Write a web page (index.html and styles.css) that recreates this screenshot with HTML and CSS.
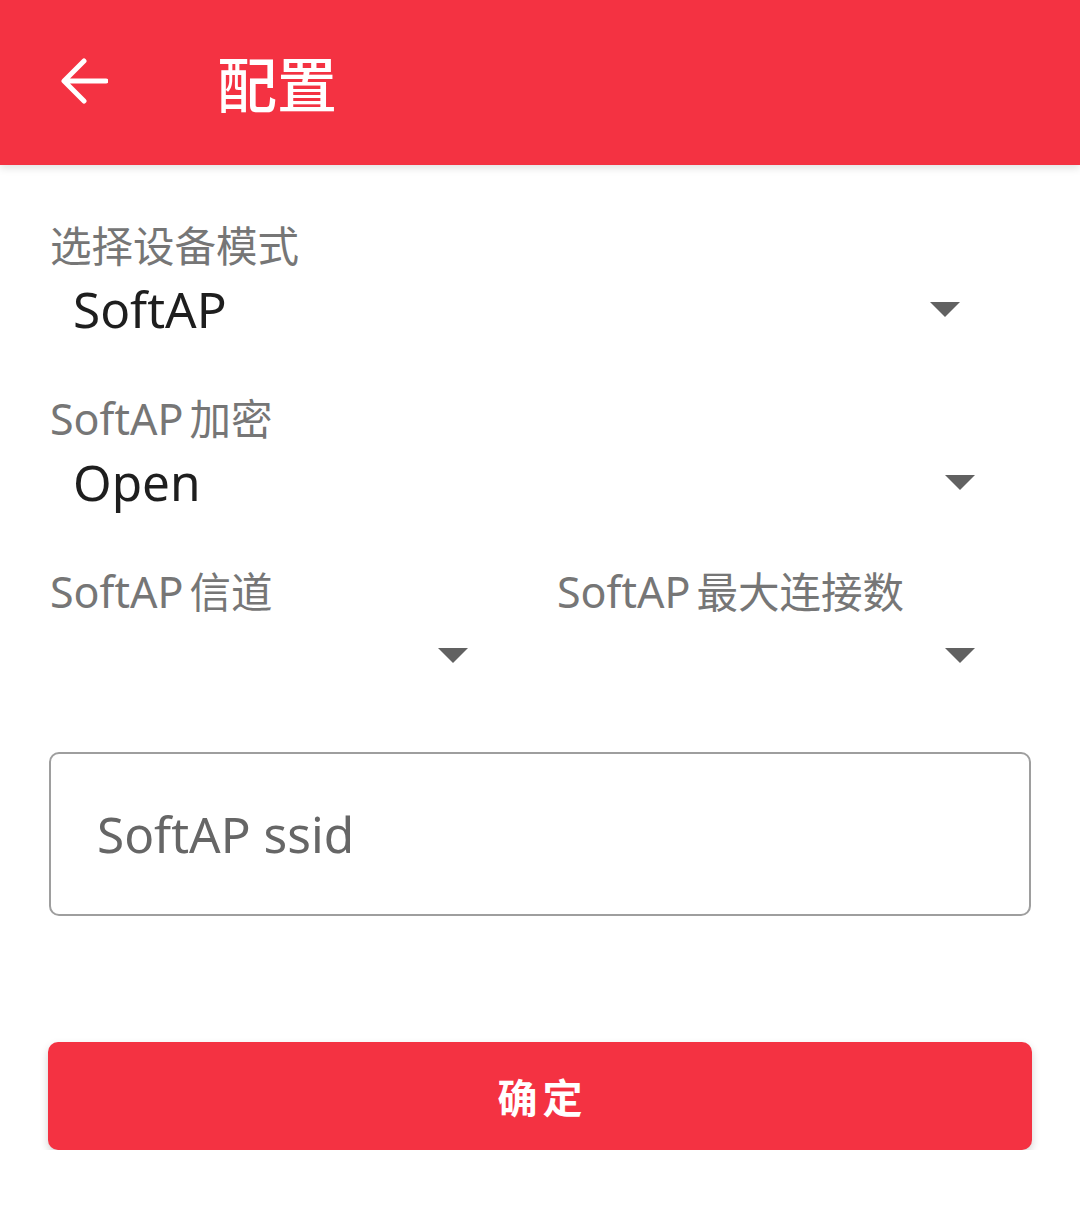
FILE: index.html
```html
<!DOCTYPE html>
<html lang="zh-CN">
<head>
    <meta charset="UTF-8">
    <meta name="viewport" content="width=device-width, initial-scale=1.0">
    <title>配置</title>
    <link rel="stylesheet" href="styles.css">
</head>
<body>
    <header class="toolbar">
        <button class="back-btn" aria-label="返回">
            <svg width="48" height="48" viewBox="0 0 48 48">
                <path d="M46 24H6M24 4L4 24l20 20" fill="none" stroke="#fff" stroke-width="5" stroke-linecap="round" stroke-linejoin="round"/>
            </svg>
        </button>
        <h1 class="title">配置</h1>
    </header>

    <main class="form">
        <div class="field">
            <label class="field-label">选择设备模式</label>
            <div class="spinner spinner-mode">
                <span class="spinner-value">SoftAP</span>
                <span class="caret"></span>
            </div>
        </div>

        <div class="field">
            <label class="field-label"><span class="latin">SoftAP</span>加密</label>
            <div class="spinner">
                <span class="spinner-value">Open</span>
                <span class="caret"></span>
            </div>
        </div>

        <div class="field-row">
            <div class="field">
                <label class="field-label"><span class="latin">SoftAP</span>信道</label>
                <div class="spinner spinner-left">
                    <span class="spinner-value"></span>
                    <span class="caret"></span>
                </div>
            </div>
            <div class="field field-right">
                <label class="field-label"><span class="latin">SoftAP</span>最大连接数</label>
                <div class="spinner">
                    <span class="spinner-value"></span>
                    <span class="caret"></span>
                </div>
            </div>
        </div>

        <div class="text-input">
            <input type="text" placeholder="SoftAP ssid">
        </div>

        <button class="confirm-btn">确定</button>
    </main>
</body>
</html>
```

FILE: styles.css
```css
* {
    margin: 0;
    padding: 0;
    box-sizing: border-box;
}

body {
    background: #fff;
    font-family: 'Noto Sans', 'Noto Sans CJK SC', sans-serif;
    color: #212121;
}

.toolbar {
    height: 165px;
    background: #f43242;
    display: flex;
    align-items: center;
    padding-left: 59px;
    box-shadow: 0 3px 8px rgba(0, 0, 0, 0.12);
    position: relative;
}

.back-btn {
    background: none;
    border: none;
    width: 50px;
    height: 50px;
    display: flex;
    align-items: center;
    justify-content: center;
    margin-top: -4px;
}

.title {
    margin-left: 108px;
    color: #fff;
    font-family: 'Noto Sans CJK SC', sans-serif;
    font-size: 60px;
    font-weight: 500;
    margin-top: -2px;
}

.form {
    padding: 55px 48px 0;
}

.field {
    height: 173px;
}

.field-label {
    display: block;
    padding-left: 2px;
    font-size: 41.5px;
    line-height: 52px;
    color: #767676;
}

.field-label .latin {
    font-size: 43px;
    margin-right: 6px;
}

.spinner {
    display: flex;
    align-items: center;
    justify-content: space-between;
    height: 74px;
    padding-left: 25px;
    padding-right: 57px;
}

.spinner-mode {
    padding-right: 72px;
}

.spinner-left {
    padding-right: 72px;
}

.spinner-value {
    font-size: 49.5px;
    color: #1e1e1e;
}

.caret {
    width: 0;
    height: 0;
    border-left: 15px solid transparent;
    border-right: 15px solid transparent;
    border-top: 15px solid #616161;
}

.field-row {
    display: grid;
    grid-template-columns: 492px 1fr;
}

.field-right {
    padding-left: 15px;
}

.field-row .field {
    height: 186px;
}

.text-input {
    height: 164px;
    border: 2px solid #9e9e9e;
    border-radius: 10px;
    display: flex;
    align-items: center;
    padding-left: 46px;
    margin-left: 1px;
    margin-right: 1px;
}

.text-input input {
    border: none;
    outline: none;
    width: 100%;
    font-family: 'Noto Sans', sans-serif;
    font-size: 49.5px;
    color: #212121;
    background: transparent;
}

.text-input input::placeholder {
    color: #666;
}

.confirm-btn {
    display: block;
    width: 100%;
    height: 108px;
    margin-top: 126px;
    background: #f43242;
    border: none;
    border-radius: 10px;
    color: #fff;
    font-family: 'Noto Sans CJK SC', sans-serif;
    font-size: 40px;
    font-weight: 700;
    letter-spacing: 5px;
    text-indent: 5px;
    box-shadow: 0 4px 8px rgba(0, 0, 0, 0.18);
}
```
